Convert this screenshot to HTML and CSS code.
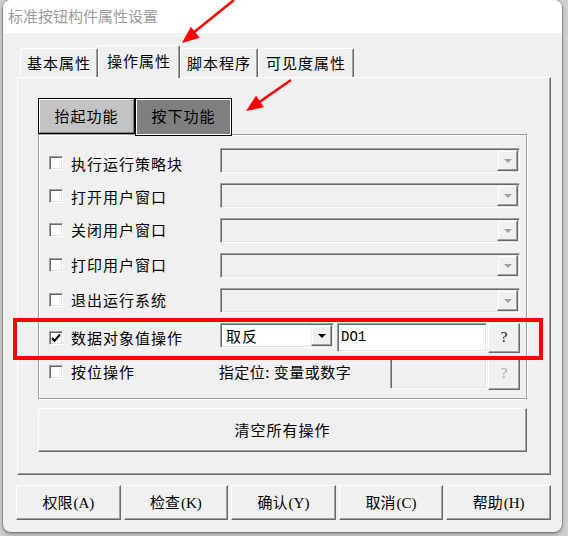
FILE: index.html
```html
<!doctype html>
<html lang="zh-CN">
 <head>
  <meta charset="UTF-8">
  <title>标准按钮构件属性设置</title>
  <link rel="stylesheet" href="styles.css">
 </head>
 <body>
  <div class="window">
   <div class="titlebar">标准按钮构件属性设置</div>
   <div class="client">
    <div class="tabs">
     <div class="tab">基本属性</div>
     <div class="tab active">操作属性</div>
     <div class="tab">脚本程序</div>
     <div class="tab wide">可见度属性</div>
    </div>
    <div class="panel">
     <div class="subtabs">
      <div class="subtab up">抬起功能</div>
      <div class="subtab down">按下功能</div>
     </div>
     <div class="group">
      <div class="row first">
       <label class="opt"><span class="check"></span>执行运行策略块</label>
       <div class="combo"><span class="drop"><i></i></span></div>
      </div>
      <div class="row second">
       <label class="opt"><span class="check"></span>打开用户窗口</label>
       <div class="combo"><span class="drop"><i></i></span></div>
      </div>
      <div class="row">
       <label class="opt"><span class="check"></span>关闭用户窗口</label>
       <div class="combo"><span class="drop"><i></i></span></div>
      </div>
      <div class="row">
       <label class="opt"><span class="check"></span>打印用户窗口</label>
       <div class="combo"><span class="drop"><i></i></span></div>
      </div>
      <div class="row">
       <label class="opt"><span class="check"></span>退出运行系统</label>
       <div class="combo"><span class="drop"><i></i></span></div>
      </div>
      <div class="row data">
       <label class="opt"><span class="check on"><svg width="10" height="10" viewBox="0 0 10 10"><polyline points="1,5 3.5,8 9,1.5" fill="none" stroke="#000" stroke-width="2"/></svg></span>数据对象值操作</label>
       <div class="combo value"><span class="text">取反</span><span class="drop"><i></i></span></div>
       <div class="field">DO1</div>
       <div class="help">?</div>
      </div>
      <div class="row bit">
       <label class="opt"><span class="check"></span>按位操作</label>
       <span class="hint">指定位:&nbsp;变量或数字</span>
       <div class="field off"></div>
       <div class="help off">?</div>
      </div>
     </div>
     <div class="clear">清空所有操作</div>
    </div>
    <div class="actions">
     <div class="btn">权限<span class="key">(A)</span></div>
     <div class="btn">检查<span class="key">(K)</span></div>
     <div class="btn">确认<span class="key">(Y)</span></div>
     <div class="btn">取消<span class="key">(C)</span></div>
     <div class="btn">帮助<span class="key">(H)</span></div>
    </div>
   </div>
  </div>
  <div class="highlight"></div>
  <svg class="marks" width="568" height="536" viewBox="0 0 568 536">
   <line x1="234" y1="0" x2="193" y2="33" stroke="#f00" stroke-width="2.5"/>
   <polygon points="182,43 199.7,37.8 190.9,26.8" fill="#f00"/>
   <line x1="291" y1="80" x2="258" y2="103" stroke="#f00" stroke-width="2.5"/>
   <polygon points="246,111 263.9,107.2 256.1,95.6" fill="#f00"/>
  </svg>
 </body>
</html>
```

FILE: styles.css
```css
* {
    box-sizing: border-box;
}

body {
    margin: 0;
    width: 568px;
    height: 536px;
    position: relative;
    overflow: hidden;
    background: #cfcfcf;
    font-family: "Noto Sans CJK SC", "Noto Sans", sans-serif;
    font-size: 15px;
    color: #000;
}

.window {
    margin-left: 3px;
    width: 559px;
    height: 532px;
    background: #f0f0f0;
    border-radius: 8px;
    overflow: hidden;
    box-shadow: 0 0 0 1px rgba(0,0,0,0.2), 0 2px 4px rgba(0,0,0,0.35);
}

.titlebar {
    height: 33px;
    background: #fff;
    color: #9b9b9b;
    padding-left: 5px;
    line-height: 32px;
}

.client {
    padding: 12px 0 0 14px;
}

/* top tabs */
.tabs {
    display: flex;
    align-items: flex-end;
    height: 32px;
    padding-left: 3px;
    position: relative;
    z-index: 1;
}

.tab {
    width: 78px;
    height: 29px;
    text-align: center;
    line-height: 27px;
    letter-spacing: 1px;
    background: #f0f0f0;
    border: 1px solid;
    border-bottom: none;
    border-color: #fff #696969 #fff #fff;
    box-shadow: inset -1px 0 #a0a0a0;
    border-radius: 2px 2px 0 0;
}

.tab.active {
    width: 82px;
    height: 33px;
    margin-bottom: -1px;
    line-height: 30px;
}

.tab.wide {
    width: 96px;
}

.panel {
    width: 534px;
    height: 398px;
    border: 1px solid;
    border-color: #fff #696969 #696969 #fff;
    box-shadow: inset -1px -1px #a0a0a0;
    padding: 20px 23px 0 20px;
}

/* up / down switch */
.subtabs {
    display: flex;
    height: 36px;
}

.subtab {
    width: 97px;
    height: 36px;
    border: 1px solid #000;
    text-align: center;
    line-height: 33px;
    letter-spacing: 1px;
    box-shadow: inset 1px 1px #fff, inset -1px -1px #808080;
}

.subtab.up {
    background: #c3c3c3;
}

.subtab.down {
    height: 38px;
    background: #7f7f7f;
    position: relative;
    z-index: 1;
    box-shadow: inset 1px 1px #fff, inset -1px -1px #fff;
}

.group {
    height: 265px;
    border: 1px solid #a0a0a0;
    box-shadow: inset 1px 1px #fff, 1px 1px #fff;
    padding: 13px 6px 0 10px;
}

.row {
    display: flex;
    align-items: center;
    height: 25px;
    margin-bottom: 10px;
}

.row.first .opt {
    padding-top: 7px;
}

.row.second .opt {
    padding-top: 3px;
}

.row.data {
    height: 30px;
    margin-bottom: 4px;
    align-items: flex-start;
}

.row.data .opt {
    padding-top: 4px;
}

.row.bit {
    height: 33px;
    margin-bottom: 0;
}

.row.bit .opt,
.row.bit .hint {
    padding-bottom: 4px;
}

.opt {
    width: 171px;
    display: flex;
    align-items: center;
    gap: 8px;
    letter-spacing: 1px;
    padding-bottom: 2px;
}

.check {
    width: 14px;
    height: 14px;
    background: #fff;
    border: 1px solid;
    border-color: #a0a0a0 #fff #fff #a0a0a0;
    box-shadow: inset 1px 1px #696969, inset -1px -1px #e3e3e3;
    display: flex;
    align-items: center;
    justify-content: center;
}

.combo {
    width: 300px;
    height: 25px;
    display: flex;
    justify-content: flex-end;
    align-items: stretch;
    border: 1px solid;
    border-color: #a0a0a0 #fff #fff #a0a0a0;
    box-shadow: inset 1px 1px #696969, inset -1px -1px #e3e3e3;
    padding: 1px;
}

.drop {
    width: 21px;
    background: #f0f0f0;
    border: 1px solid;
    border-color: #f0f0f0 #696969 #696969 #f0f0f0;
    box-shadow: inset -1px -1px #a0a0a0, inset 1px 1px #fff;
    display: flex;
    align-items: center;
    justify-content: center;
}

.drop i {
    width: 0;
    height: 0;
    border-left: 4px solid transparent;
    border-right: 4px solid transparent;
    border-top: 4px solid #a0a0a0;
}

.combo.value {
    width: 114px;
    background: #fff;
    justify-content: space-between;
}

.combo.value .text {
    padding-left: 4px;
    line-height: 21px;
    letter-spacing: 1px;
}

.combo.value .drop i {
    border-top-color: #000;
}

.field {
    width: 150px;
    height: 29px;
    margin-left: 3px;
    background: #fff;
    border: 1px solid;
    border-color: #a0a0a0 #fff #fff #a0a0a0;
    box-shadow: inset 1px 1px #696969, inset -1px -1px #e3e3e3;
    padding: 3px 0 0 3px;
    font-family: "Liberation Mono", monospace;
    font-size: 14px;
    line-height: 20px;
}

.field.off {
    width: 97px;
    height: 31px;
    margin-left: 0;
    background: #f0f0f0;
}

.help {
    width: 32px;
    height: 30px;
    margin-left: 1px;
    border: 1px solid;
    border-color: #fff #696969 #696969 #fff;
    box-shadow: inset -1px -1px #a0a0a0;
    text-align: center;
    line-height: 27px;
    font-family: "Liberation Serif", serif;
    font-size: 15px;
}

.help.off {
    height: 33px;
    line-height: 30px;
    color: #a6a6a6;
}

.hint {
    width: 171px;
    letter-spacing: 0.5px;
    margin-left: -1px;
    margin-right: 1px;
}

.clear {
    margin-top: 9px;
    height: 44px;
    width: 489px;
    border: 1px solid;
    border-color: #fff #696969 #696969 #fff;
    box-shadow: inset -1px -1px #a0a0a0;
    text-align: center;
    line-height: 41px;
    letter-spacing: 1px;
}

/* dialog buttons */
.actions {
    display: grid;
    grid-template-columns: repeat(5, 1fr);
    gap: 3px;
    width: 535px;
    margin: 10px 0 0 -1px;
}

.btn {
    height: 35px;
    border: 1px solid;
    border-color: #fff #696969 #696969 #fff;
    box-shadow: inset -1px -1px #a0a0a0;
    text-align: center;
    line-height: 32px;
}

.key {
    font-family: "Liberation Serif", serif;
    font-size: 15px;
    margin-left: 1px;
}

/* annotation overlays */
.highlight {
    position: absolute;
    left: 13px;
    top: 318px;
    width: 530px;
    height: 42px;
    border: 4px solid #f00;
}

.marks {
    position: absolute;
    left: 0;
    top: 0;
    pointer-events: none;
}
```
